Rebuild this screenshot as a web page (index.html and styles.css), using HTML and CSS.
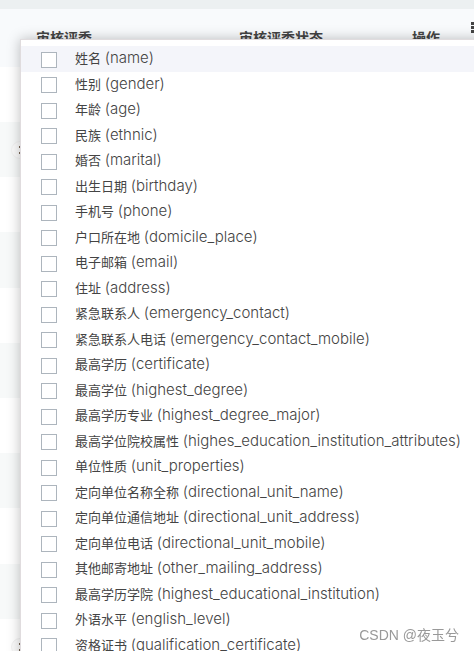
FILE: index.html
```
<!DOCTYPE html>
<html lang="zh-CN">
<head>
  <meta charset="UTF-8" />
  <meta name="viewport" content="width=device-width, initial-scale=1.0"/>
  <title>审核评委</title>
  <link rel="stylesheet" href="styles.css">
</head>
<body>
  <div class="toolbar"></div>
  <div class="table-wrap">
    <table class="judges">
      <colgroup><col class="col-name"><col class="col-status"><col class="col-action"></colgroup>
      <thead>
        <tr><th>审核评委</th><th>审核评委状态</th><th>操作</th></tr>
      </thead>
      <tbody>
        <tr><td colspan="3"></td></tr>
        <tr><td colspan="3"><button class="row-btn" aria-label="更多"><span class="dots"></span></button></td></tr>
        <tr><td colspan="3"></td></tr>
        <tr><td colspan="3"></td></tr>
        <tr><td colspan="3"></td></tr>
        <tr><td colspan="3"></td></tr>
        <tr><td colspan="3"></td></tr>
        <tr><td colspan="3"></td></tr>
        <tr><td colspan="3"></td></tr>
        <tr><td colspan="3"></td></tr>
        <tr><td colspan="3"><button class="row-btn" aria-label="更多"><span class="dots"></span></button></td></tr>
      </tbody>
    </table>

    <button class="columns-btn" aria-label="列">
      <svg width="11" height="11" viewBox="0 0 11 11" fill="#444"><path d="M0 0h3v3H0zM4 0h3v3H4zM8 0h3v3H8zM0 4h3v3H0zM4 4h3v3H4zM8 4h3v3H8zM0 8h3v3H0zM4 8h3v3H4zM8 8h3v3H8z"/></svg>
    </button>

    <div class="column-menu">
      <label class="item active"><input type="checkbox"><span class="text">姓名 <span class="key">(name)</span></span></label>
      <label class="item"><input type="checkbox"><span class="text">性别 <span class="key">(gender)</span></span></label>
      <label class="item"><input type="checkbox"><span class="text">年龄 <span class="key">(age)</span></span></label>
      <label class="item"><input type="checkbox"><span class="text">民族 <span class="key">(ethnic)</span></span></label>
      <label class="item"><input type="checkbox"><span class="text">婚否 <span class="key">(marital)</span></span></label>
      <label class="item"><input type="checkbox"><span class="text">出生日期 <span class="key">(birthday)</span></span></label>
      <label class="item"><input type="checkbox"><span class="text">手机号 <span class="key">(phone)</span></span></label>
      <label class="item"><input type="checkbox"><span class="text">户口所在地 <span class="key">(domicile_place)</span></span></label>
      <label class="item"><input type="checkbox"><span class="text">电子邮箱 <span class="key">(email)</span></span></label>
      <label class="item"><input type="checkbox"><span class="text">住址 <span class="key">(address)</span></span></label>
      <label class="item"><input type="checkbox"><span class="text">紧急联系人 <span class="key">(emergency_contact)</span></span></label>
      <label class="item"><input type="checkbox"><span class="text">紧急联系人电话 <span class="key">(emergency_contact_mobile)</span></span></label>
      <label class="item"><input type="checkbox"><span class="text">最高学历 <span class="key">(certificate)</span></span></label>
      <label class="item"><input type="checkbox"><span class="text">最高学位 <span class="key">(highest_degree)</span></span></label>
      <label class="item"><input type="checkbox"><span class="text">最高学历专业 <span class="key">(highest_degree_major)</span></span></label>
      <label class="item"><input type="checkbox"><span class="text">最高学位院校属性 <span class="key">(highes_education_institution_attributes)</span></span></label>
      <label class="item"><input type="checkbox"><span class="text">单位性质 <span class="key">(unit_properties)</span></span></label>
      <label class="item"><input type="checkbox"><span class="text">定向单位名称全称 <span class="key">(directional_unit_name)</span></span></label>
      <label class="item"><input type="checkbox"><span class="text">定向单位通信地址 <span class="key">(directional_unit_address)</span></span></label>
      <label class="item"><input type="checkbox"><span class="text">定向单位电话 <span class="key">(directional_unit_mobile)</span></span></label>
      <label class="item"><input type="checkbox"><span class="text">其他邮寄地址 <span class="key">(other_mailing_address)</span></span></label>
      <label class="item"><input type="checkbox"><span class="text">最高学历学院 <span class="key">(highest_educational_institution)</span></span></label>
      <label class="item"><input type="checkbox"><span class="text">外语水平 <span class="key">(english_level)</span></span></label>
      <label class="item"><input type="checkbox"><span class="text">资格证书 <span class="key">(qualification_certificate)</span></span></label>
    </div>
  </div>

  <div class="watermark">CSDN @夜玉兮</div>
</body>
</html>
```
FILE: styles.css
```
* {
  box-sizing: border-box;
}

body {
  margin: 0;
  height: 100vh;
  overflow: hidden;
  background-color: #fff;
  color: #444;
  font-family: Inter, "Noto Sans CJK SC", sans-serif;
  font-size: 13px;
}

.toolbar {
  height: 9px;
  background-color: #ecf0f1;
}

.table-wrap {
  position: relative;
}

.judges {
  width: 100%;
  table-layout: fixed;
  border-collapse: collapse;
}

.col-name {
  width: 203px;
}

.col-status {
  width: 173px;
}

.judges th {
  height: 58px;
  padding: 0 0 2px 36px;
  background-color: #f8fafc;
  font-size: 14px;
  font-weight: 700;
  text-align: left;
  white-space: nowrap;
}

.judges td {
  height: 55px;
  padding: 0 0 0 11px;
}

.judges tr:nth-child(5n+4) td {
  height: 56px;
}

.judges tbody tr:nth-child(even) {
  background-color: #f7f9f9;
}

.row-btn {
  display: flex;
  align-items: center;
  justify-content: center;
  width: 18px;
  height: 18px;
  padding: 0;
  border: 1px solid #f2f2f2;
  border-radius: 50%;
  background-color: #fbfbfb;
}

.dots {
  width: 2px;
  height: 8px;
  border-top: 2px solid #765;
  border-bottom: 2px solid #765;
}

.columns-btn {
  position: absolute;
  top: 13px;
  right: -8px;
  padding: 0;
  border: none;
  background: none;
  line-height: 0;
}

.column-menu {
  position: absolute;
  top: 30px;
  left: 20px;
  right: -20px;
  display: grid;
  grid-auto-rows: 26px 25px;
  padding: 6px 0;
  background-color: #fff;
  border: 1px solid #e0dcde;
  box-shadow: 0 0 12px rgba(0, 0, 0, 0.25);
}

.item {
  display: flex;
  align-items: center;
  gap: 18px;
  padding: 1px 0 0 20px;
  white-space: nowrap;
}

.item.active {
  background-color: #f4f5fa;
}

.item input {
  appearance: none;
  width: 16px;
  height: 16px;
  margin: 0;
  border: 1px solid #adb5bd;
  background-color: #fff;
}

.text {
  padding-bottom: 4px;
}

.key {
  font-size: 15px;
  font-weight: 300;
}

.watermark {
  position: fixed;
  right: 15px;
  bottom: 7px;
  color: #999;
  font-family: "Liberation Sans", "Noto Sans CJK SC", sans-serif;
  font-size: 14px;
}
```
